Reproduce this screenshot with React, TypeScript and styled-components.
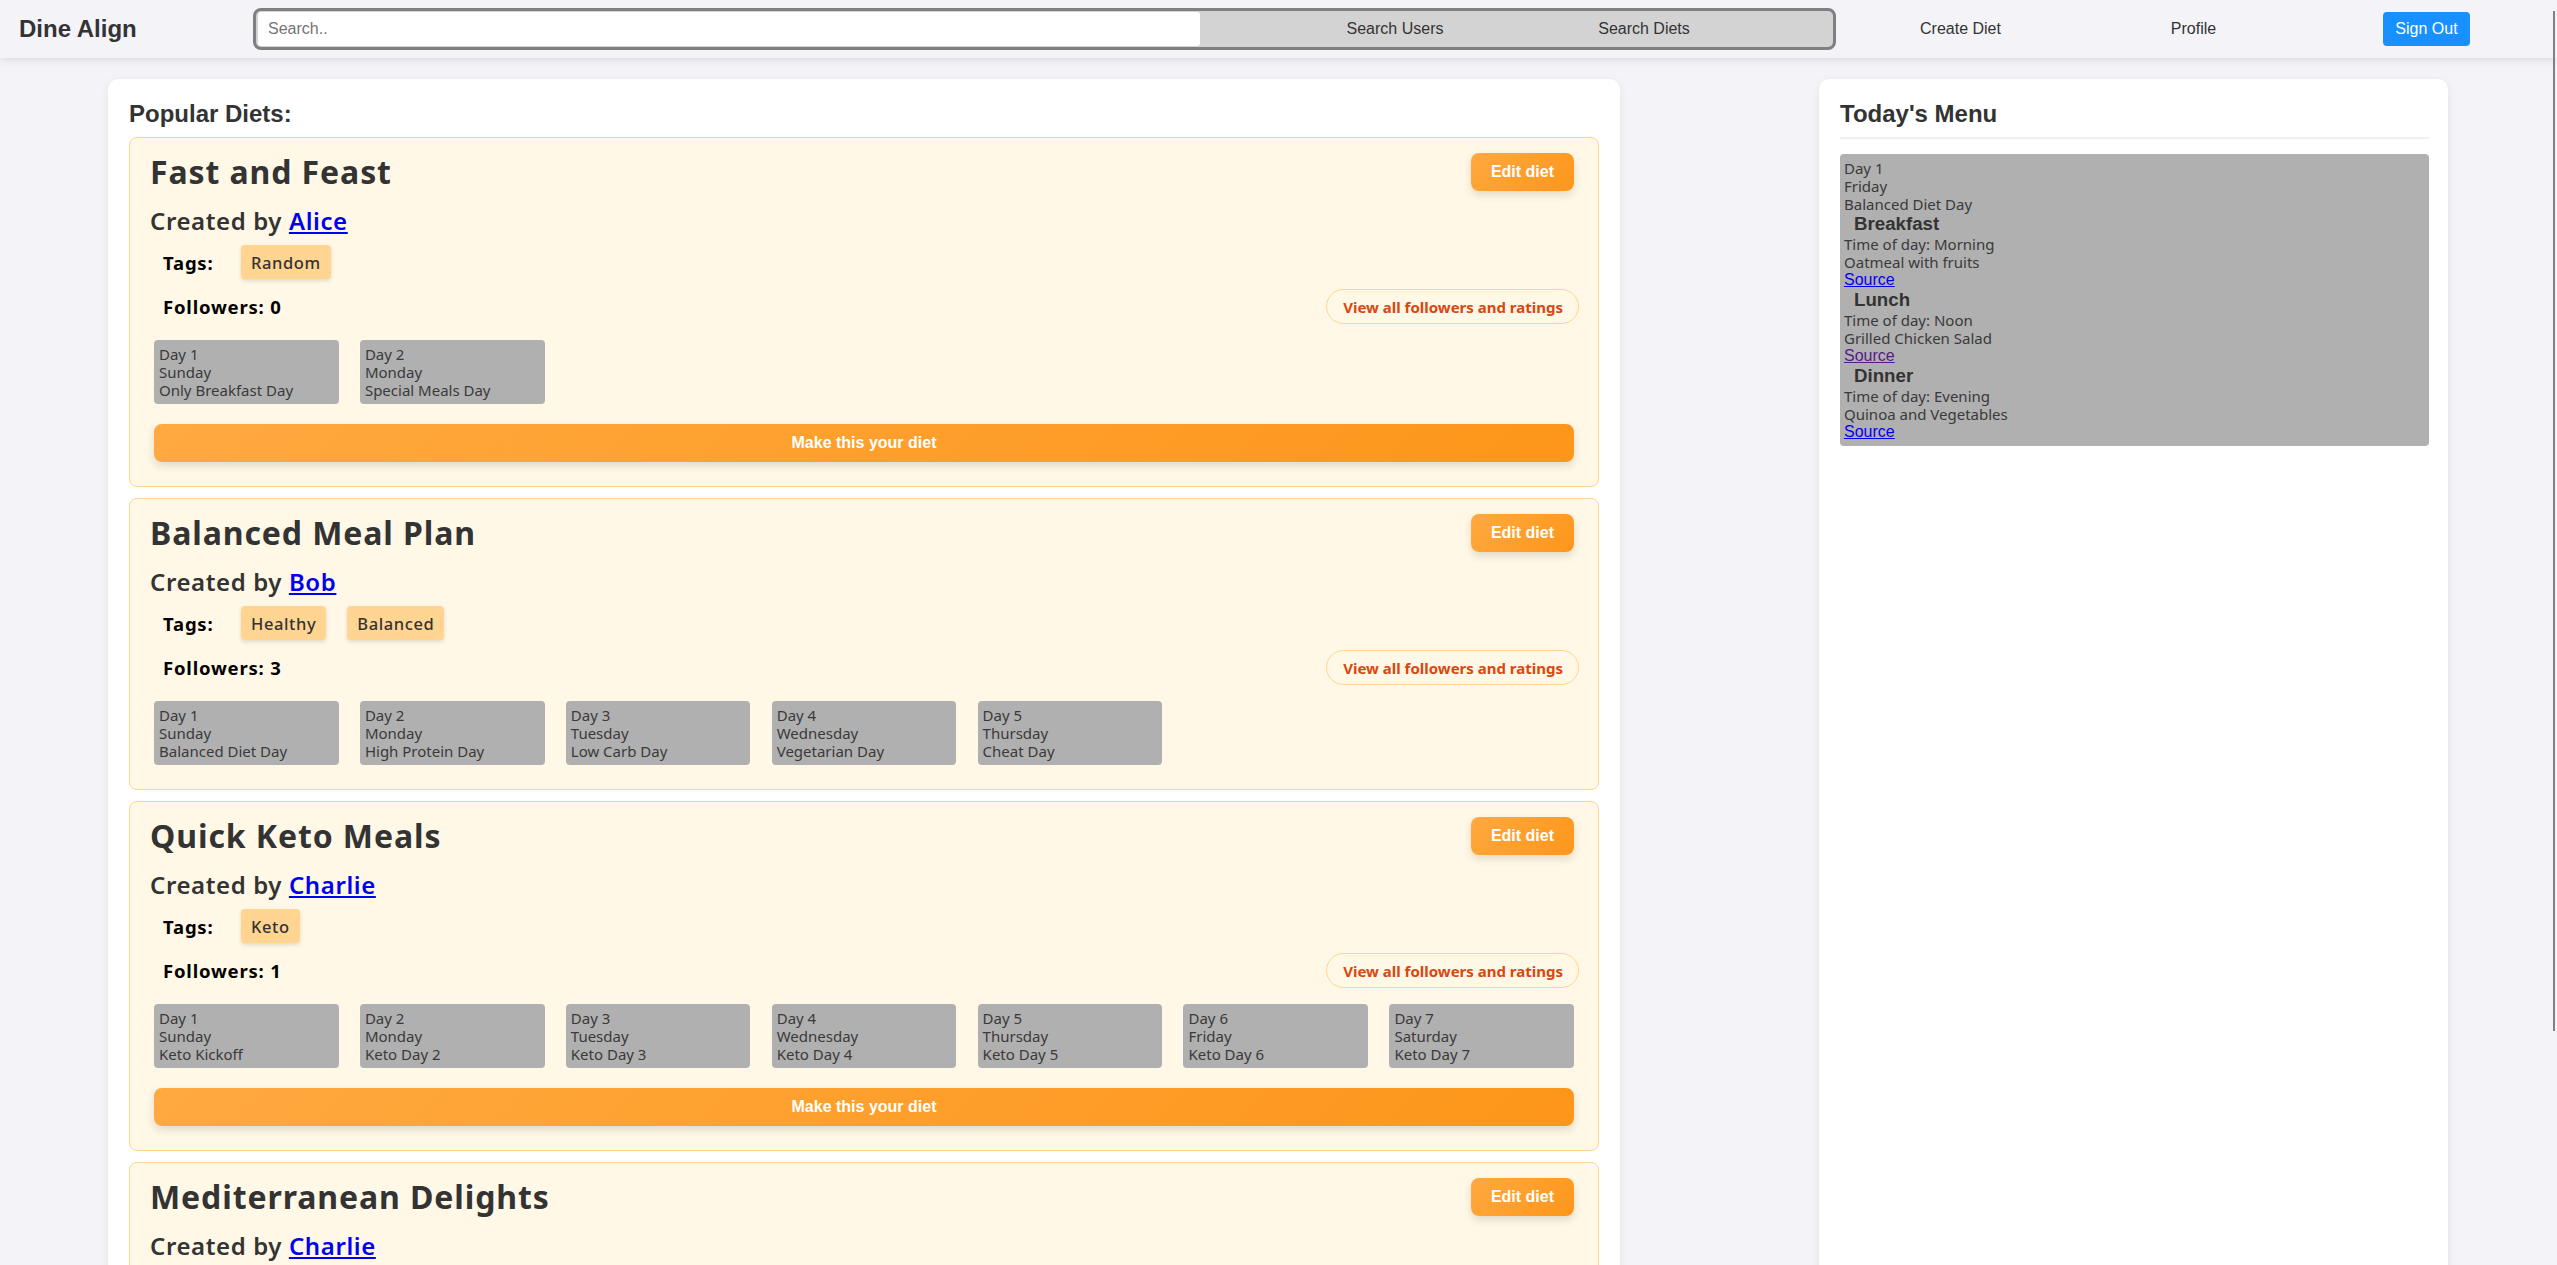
import React from "react";
import styled, { createGlobalStyle } from "styled-components";

const SANS = '"Liberation Sans", Arial, sans-serif';
const CARD_FONT = '"Noto Sans", "Open Sans", sans-serif';

const GlobalStyle = createGlobalStyle`
  html, body {
    margin: 0;
    padding: 0;
    background: #f4f3f8;
    font-family: ${SANS};
  }
  * { box-sizing: border-box; }
`;

const Header = styled.header`
  position: relative;
  z-index: 1;
  height: 58px;
  display: flex;
  align-items: center;
  padding: 0 14px 0 19px;
  background: #f4f3f8;
  box-shadow: 0 2px 8px rgba(0, 0, 0, 0.1);
`;

const Logo = styled.div`
  width: 234px;
  flex-shrink: 0;
  font: bold 24px ${SANS};
  color: #333;
`;

const SearchForm = styled.form`
  width: 1583px;
  height: 42px;
  flex-shrink: 0;
  display: flex;
  align-items: center;
  border: 3px solid #808080;
  border-radius: 8px;
  background: #d3d3d3;
  overflow: hidden;
`;

const SearchInput = styled.input`
  width: 942px;
  height: 34px;
  margin-left: 2px;
  border: none;
  border-radius: 3px;
  background: #fff;
  padding: 0 10px;
  font: 16px ${SANS};
  color: #333;
  outline: none;
  &::placeholder { color: #757575; }
`;

const SearchButtons = styled.div`
  flex: 1;
  height: 100%;
  display: flex;
  justify-content: center;
  padding-left: 6px;
`;

const SearchButton = styled.button`
  width: 249px;
  height: 100%;
  border: none;
  background: transparent;
  font: 16px ${SANS};
  color: #333;
  cursor: pointer;
`;

const Nav = styled.nav`
  display: flex;
  margin-left: 8px;
`;

const NavItem = styled.div`
  width: 233px;
  display: flex;
  justify-content: center;
  align-items: center;
`;

const NavLink = styled.a`
  font: 16px ${SANS};
  color: #333;
  text-decoration: none;
`;

const SignOutButton = styled.button`
  height: 34px;
  padding: 0 12px;
  border: none;
  border-radius: 4px;
  background: #1890ff;
  color: #fff;
  font: 16px ${SANS};
`;

const ScrollThumb = styled.div`
  position: fixed;
  top: 11px;
  right: 2px;
  width: 2px;
  height: 1020px;
  background: #808080;
  z-index: 2;
`;

const Content = styled.div`
  display: flex;
  justify-content: space-between;
  align-items: stretch;
  padding: 21px 109px 40px 108px;
`;

const MainPanel = styled.main`
  width: 1512px;
  background: #fff;
  border-radius: 10px;
  padding: 21px 21px 10px;
  box-shadow: 0 2px 8px rgba(0, 0, 0, 0.08);
`;

const SidePanel = styled.aside`
  width: 629px;
  background: #fff;
  border-radius: 10px;
  padding: 21px 19px 21px 21px;
  box-shadow: 0 2px 8px rgba(0, 0, 0, 0.08);
`;

const PanelTitle = styled.h2<{ $divider?: boolean }>`
  margin: 0 0 ${(p) => (p.$divider ? "15px" : "9px")};
  font: bold 24px ${SANS};
  line-height: 28px;
  color: #333;
  padding-bottom: ${(p) => (p.$divider ? "9px" : "0")};
  border-bottom: ${(p) => (p.$divider ? "2px solid #f0f0f0" : "none")};
`;

const DietCard = styled.section`
  border: 1px solid #ffd591;
  border-radius: 8px;
  background: #fff8e6;
  padding: 15px 20px 24px;
  margin-bottom: 11px;
`;

const TitleRow = styled.div`
  height: 38px;
  display: flex;
  justify-content: space-between;
  align-items: center;
`;

const DietTitle = styled.h1`
  margin: 0;
  font: 700 32px ${CARD_FONT};
  letter-spacing: 0.9px;
  line-height: 38px;
  color: #333;
`;

const OrangeButton = styled.button`
  height: 38px;
  border: none;
  border-radius: 8px;
  background: linear-gradient(135deg, #ffa940, #fd961a);
  color: #fff;
  font: bold 16px ${SANS};
  box-shadow: 0 4px 8px rgba(0, 0, 0, 0.12);
  cursor: pointer;
`;

const EditButton = styled(OrangeButton)`
  padding: 0 20px;
  margin-right: 4px;
`;

const MakeButton = styled(OrangeButton)`
  display: block;
  width: calc(100% - 8px);
  margin: 20px 4px 0;
`;

const CreatedBy = styled.h2`
  margin: 15px 0 0;
  font: 600 24px ${CARD_FONT};
  letter-spacing: 0.6px;
  line-height: 29px;
  color: #333;
`;

const AuthorLink = styled.a`
  color: #0000ee;
  text-decoration: underline;
`;

const TagsRow = styled.div`
  margin-top: 10px;
  height: 34px;
  display: flex;
  align-items: center;
  gap: 21px;
  padding-left: 13px;
`;

const RowLabel = styled.span<{ $width?: number }>`
  ${(p) => (p.$width ? `width: ${p.$width}px;` : "")}
  font: 700 18.5px ${CARD_FONT};
  letter-spacing: 0.8px;
  color: #000;
`;

const Chip = styled.span`
  height: 34px;
  display: flex;
  align-items: center;
  padding: 0 10px;
  border-radius: 4px;
  background: #ffd591;
  font: 500 16.5px ${CARD_FONT};
  letter-spacing: 0.6px;
  color: #333;
  box-shadow: 0 2px 4px rgba(0, 0, 0, 0.12);
`;

const FollowersRow = styled.div`
  margin-top: 10px;
  height: 35px;
  display: flex;
  justify-content: space-between;
  align-items: center;
  padding-left: 13px;
`;

const ViewAllButton = styled.button`
  height: 35px;
  padding: 0 15px 0 16px;
  margin-right: -1px;
  border: 1px solid #ffd591;
  border-radius: 18px;
  background: transparent;
  color: #d9480f;
  font: 700 15px ${CARD_FONT};
  cursor: pointer;
`;

const DayGrid = styled.div`
  margin: 16px 4px 0;
  display: grid;
  grid-template-columns: repeat(7, 1fr);
  column-gap: 21.3px;
`;

const GrayBox = styled.div`
  background: #b0b0b0;
  border-radius: 4px;
  font: 400 15px ${CARD_FONT};
  line-height: 18px;
  color: #3a3a3a;
`;

const DayCard = styled(GrayBox)`
  height: 64px;
  padding: 5px;
  white-space: nowrap;
  overflow: hidden;
`;

const MenuBox = styled(GrayBox)`
  padding: 5px 4px;
`;

const Line = styled.div`
  height: 18px;
`;

const SourceLine = styled.div`
  height: 18px;
  font: 16px ${SANS};
  line-height: 18px;
`;

const MealTitle = styled.h3`
  margin: 0;
  padding-left: 10px;
  font: bold 18.7px ${SANS};
  line-height: 22px;
  color: #333;
`;

const SourceLink = styled.a<{ $visited?: boolean }>`
  color: ${(p) => (p.$visited ? "#551a8b" : "#0000ee")};
  text-decoration: underline;
`;

type Day = { day: string; name: string; title: string };
type Diet = {
  title: string;
  author: string;
  tags: string[];
  followers: number;
  days: Day[];
  canMake: boolean;
};

const WEEK = ["Sunday", "Monday", "Tuesday", "Wednesday", "Thursday", "Friday", "Saturday"];
const mk = (titles: string[]): Day[] =>
  titles.map((t, i) => ({ day: `Day ${i + 1}`, name: WEEK[i], title: t }));

const diets: Diet[] = [
  {
    title: "Fast and Feast",
    author: "Alice",
    tags: ["Random"],
    followers: 0,
    days: mk(["Only Breakfast Day", "Special Meals Day"]),
    canMake: true,
  },
  {
    title: "Balanced Meal Plan",
    author: "Bob",
    tags: ["Healthy", "Balanced"],
    followers: 3,
    days: mk(["Balanced Diet Day", "High Protein Day", "Low Carb Day", "Vegetarian Day", "Cheat Day"]),
    canMake: false,
  },
  {
    title: "Quick Keto Meals",
    author: "Charlie",
    tags: ["Keto"],
    followers: 1,
    days: mk(["Keto Kickoff", "Keto Day 2", "Keto Day 3", "Keto Day 4", "Keto Day 5", "Keto Day 6", "Keto Day 7"]),
    canMake: true,
  },
  {
    title: "Mediterranean Delights",
    author: "Charlie",
    tags: ["Mediterranean"],
    followers: 2,
    days: mk(["Olive Oil Day", "Seafood Day", "Greek Salad Day"]),
    canMake: true,
  },
];

const meals = [
  { name: "Breakfast", time: "Morning", food: "Oatmeal with fruits", visited: false },
  { name: "Lunch", time: "Noon", food: "Grilled Chicken Salad", visited: true },
  { name: "Dinner", time: "Evening", food: "Quinoa and Vegetables", visited: false },
];

function DietItem({ diet }: { diet: Diet }) {
  return (
    <DietCard>
      <TitleRow>
        <DietTitle>{diet.title}</DietTitle>
        <EditButton>Edit diet</EditButton>
      </TitleRow>
      <CreatedBy>
        Created by <AuthorLink href="#">{diet.author}</AuthorLink>
      </CreatedBy>
      <TagsRow>
        <RowLabel $width={57}>Tags:</RowLabel>
        {diet.tags.map((t) => (
          <Chip key={t}>{t}</Chip>
        ))}
      </TagsRow>
      <FollowersRow>
        <RowLabel>Followers: {diet.followers}</RowLabel>
        <ViewAllButton>View all followers and ratings</ViewAllButton>
      </FollowersRow>
      <DayGrid>
        {diet.days.map((d) => (
          <DayCard key={d.day}>
            <Line>{d.day}</Line>
            <Line>{d.name}</Line>
            <Line>{d.title}</Line>
          </DayCard>
        ))}
      </DayGrid>
      {diet.canMake && <MakeButton>Make this your diet</MakeButton>}
    </DietCard>
  );
}

export default function App() {
  return (
    <>
      <GlobalStyle />
      <ScrollThumb />
      <Header>
        <Logo>Dine Align</Logo>
        <SearchForm onSubmit={(e) => e.preventDefault()}>
          <SearchInput placeholder="Search.." />
          <SearchButtons>
            <SearchButton type="button">Search Users</SearchButton>
            <SearchButton type="button">Search Diets</SearchButton>
          </SearchButtons>
        </SearchForm>
        <Nav>
          <NavItem>
            <NavLink href="#">Create Diet</NavLink>
          </NavItem>
          <NavItem>
            <NavLink href="#">Profile</NavLink>
          </NavItem>
          <NavItem>
            <SignOutButton>Sign Out</SignOutButton>
          </NavItem>
        </Nav>
      </Header>
      <Content>
        <MainPanel>
          <PanelTitle>Popular Diets:</PanelTitle>
          {diets.map((d) => (
            <DietItem key={d.title} diet={d} />
          ))}
        </MainPanel>
        <SidePanel>
          <PanelTitle $divider>Today's Menu</PanelTitle>
          <MenuBox>
            <Line>Day 1</Line>
            <Line>Friday</Line>
            <Line>Balanced Diet Day</Line>
            {meals.map((m) => (
              <React.Fragment key={m.name}>
                <MealTitle>{m.name}</MealTitle>
                <Line>Time of day: {m.time}</Line>
                <Line>{m.food}</Line>
                <SourceLine>
                  <SourceLink href="#" $visited={m.visited}>
                    Source
                  </SourceLink>
                </SourceLine>
              </React.Fragment>
            ))}
          </MenuBox>
        </SidePanel>
      </Content>
    </>
  );
}
